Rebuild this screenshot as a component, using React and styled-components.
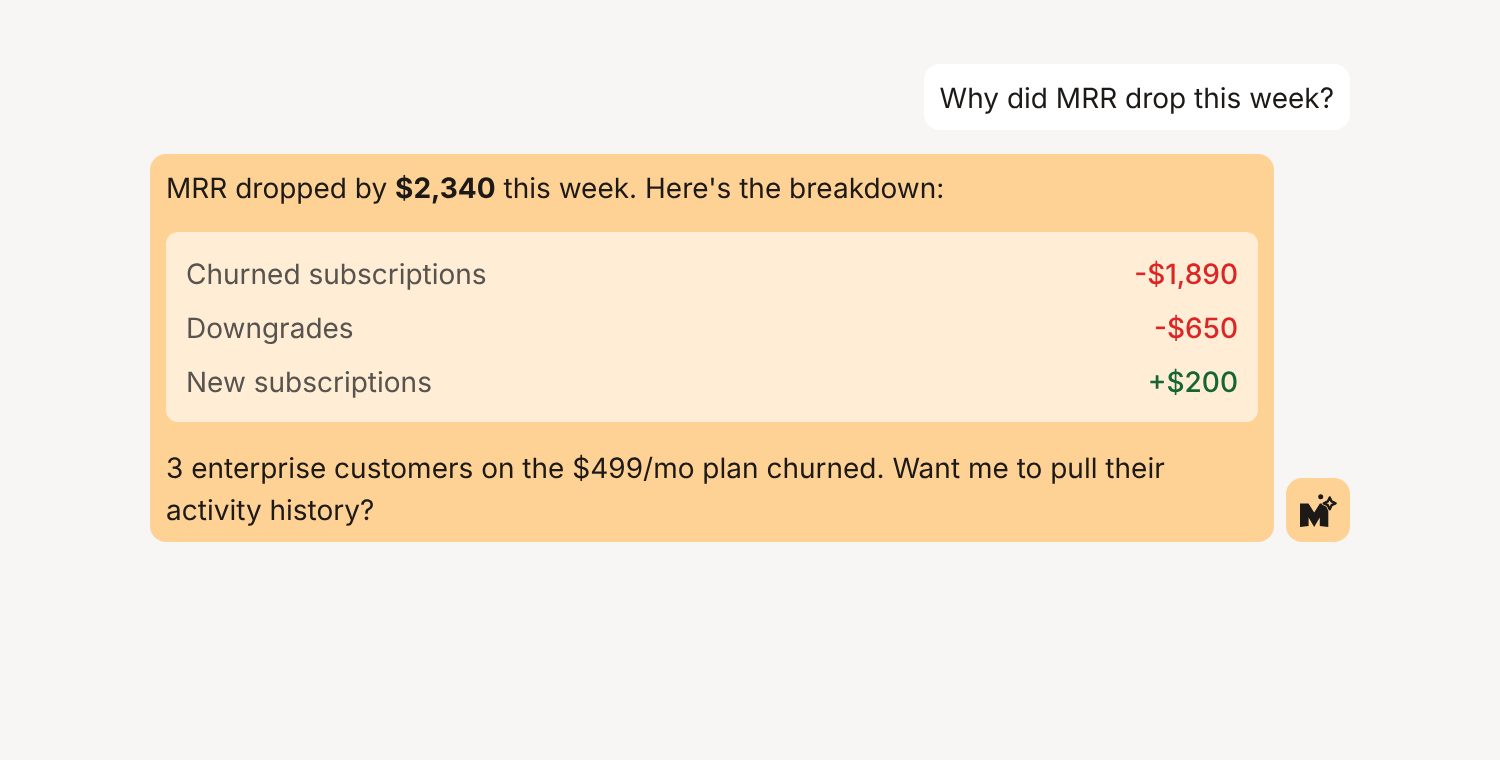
import styled, { createGlobalStyle } from 'styled-components';

const GlobalStyle = createGlobalStyle`
  * {
    box-sizing: border-box;
  }

  body {
    margin: 0;
    background: #f7f6f4;
    color: #1c1917;
    font-family: 'Inter', 'Liberation Sans', sans-serif;
    font-size: 28px;
    line-height: 42px;
    text-rendering: geometricPrecision;
    font-variation-settings: 'opsz' 14;
  }
`;

const Page = styled.main`
  display: flex;
  flex-direction: column;
  gap: 24px;
  min-height: 760px;
  padding: 64px 150px;
  will-change: transform;
`;

const UserRow = styled.div`
  display: flex;
  justify-content: flex-end;
`;

const UserBubble = styled.div`
  background: #fff;
  border-radius: 16px;
  padding: 13px 16px 11px;
`;

const AssistantRow = styled.div`
  display: flex;
  align-items: flex-end;
  gap: 12px;
`;

const AssistantBubble = styled.div`
  flex: 1;
  background: #fed294;
  border-radius: 16px;
  padding: 13px 16px 11px;
`;

const Breakdown = styled.div`
  display: flex;
  flex-direction: column;
  gap: 12px;
  margin: 23px 0 25px;
  padding: 21px 20px 19px;
  background: #ffedd5;
  border-radius: 12px;
`;

const Line = styled.div`
  display: flex;
  justify-content: space-between;
`;

const Label = styled.span`
  color: #57534e;
`;

const Amount = styled.span`
  font-weight: 500;
  color: ${(p) => (p.$up ? '#166534' : '#dc2626')};
`;

const Avatar = styled.div`
  display: flex;
  align-items: center;
  justify-content: center;
  flex: none;
  width: 64px;
  height: 64px;
  background: #fed294;
  border-radius: 16px;
`;

const STAR = 'M31.7 7.4L33.6 11.4L37.6 13.3L33.6 15.2L31.7 19.2L29.8 15.2L25.8 13.3L29.8 11.4Z';

function SparkleM() {
  return (
    <svg width='40' height='40' viewBox='0 0 40 40' fill='none'>
      <path
        d='M2 13.5H10.5L16.2 22.5L21.9 13.5H30.3V37L21.8 36V27.5L16.2 37L10.6 27.5V36L2 37Z'
        fill='#1c1917'
      />
      <circle cx='22.7' cy='6.7' r='2.5' fill='#1c1917' />
      <path d={STAR} fill='#fed294' stroke='#fed294' strokeWidth='4' strokeLinejoin='round' />
      <path d={STAR} fill='#fed294' stroke='#1c1917' strokeWidth='2.4' strokeLinejoin='round' />
    </svg>
  );
}

const rows = [
  { label: 'Churned subscriptions', amount: '-$1,890' },
  { label: 'Downgrades', amount: '-$650' },
  { label: 'New subscriptions', amount: '+$200', up: true },
];

export default function App() {
  return (
    <Page>
      <GlobalStyle />
      <UserRow>
        <UserBubble>Why did MRR drop this week?</UserBubble>
      </UserRow>
      <AssistantRow>
        <AssistantBubble>
          <div>
            MRR dropped by <strong>$2,340</strong> this week. Here's the breakdown:
          </div>
          <Breakdown>
            {rows.map((row) => (
              <Line key={row.label}>
                <Label>{row.label}</Label>
                <Amount $up={row.up}>{row.amount}</Amount>
              </Line>
            ))}
          </Breakdown>
          <div>3 enterprise customers on the $499/mo plan churned. Want me to pull their activity history?</div>
        </AssistantBubble>
        <Avatar>
          <SparkleM />
        </Avatar>
      </AssistantRow>
    </Page>
  );
}
